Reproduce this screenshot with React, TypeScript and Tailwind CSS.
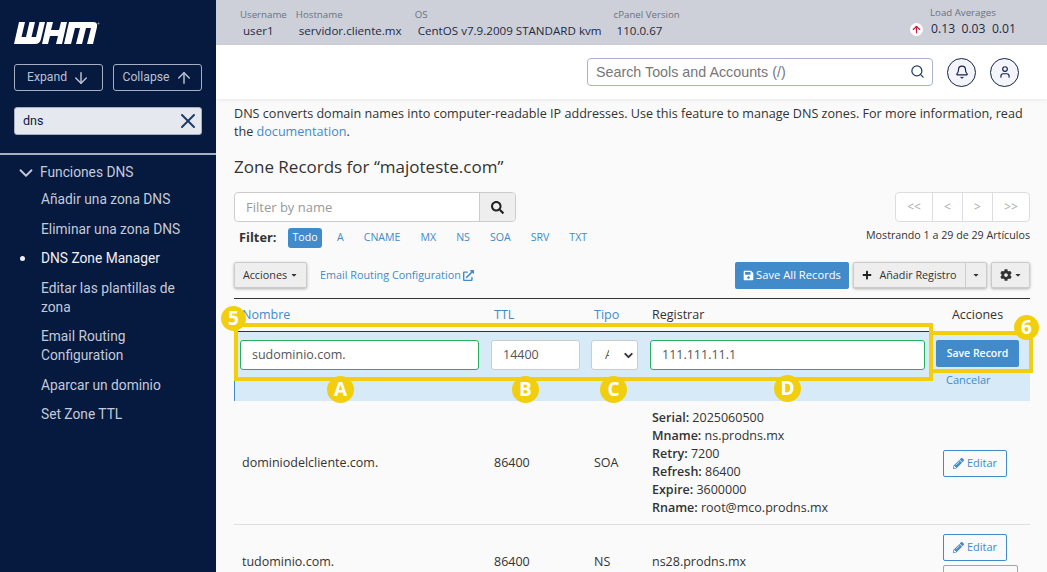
import React from "react";
import { ArrowDown, ArrowUp, X, ChevronDown, Search, Bell, User } from "lucide-react";
import { FaSearch, FaExternalLinkAlt, FaSave, FaPlus, FaCog, FaPencilAlt, FaCaretDown } from "react-icons/fa";

function Logo() {
  return (
    <svg width="86" height="23" viewBox="0 0 86 23" className="block">
      <path fill="#fff" d="M5 0h6L7.500 15H12L15.500 0H21L17.500 15H22L25.500 0H31L27 17Q26 22 21 22H0z" />
      <path fill="#fff" d="M33 0h6l-2 8h8l2-8h6l-5 22h-6l2-8h-8l-2 8h-6z" />
      <path fill="#fff" d="M55 0H79Q84 0 83 5L79 22H73L77 6H72L68 22H62L66 6H61L57 22H50z" />
      <circle cx="84.500" cy="1.500" r="1" fill="#8f97ad" />
    </svg>
  );
}

function Head({ label, value, labelCls, valueCls }: { label: string; value: string; labelCls: string; valueCls: string }) {
  return (
    <div className="flex flex-col">
      <span className={`text-[9.7px] leading-[14px] text-[#6b7280] ${labelCls}`}>{label}</span>
      <span className={`text-[11.6px] leading-[18px] text-[#1f2a44] ${valueCls}`}>{value}</span>
    </div>
  );
}

function Nav({ children, active }: { children: React.ReactNode; active?: boolean }) {
  return (
    <div className={`relative pl-[41px] pr-6 py-[5.25px] leading-[19px] text-[13.75px] ${active ? "text-[#eef0f5]" : "text-[#c4cad9]"}`}>
      {active && <span className="absolute left-[20px] top-[12px] w-[5px] h-[5px] rounded-full bg-[#eef0f5]" />}
      {children}
    </div>
  );
}

function Badge({ t, cls }: { t: string; cls: string }) {
  return (
    <span className={`absolute flex items-center justify-center rounded-full bg-[#f2cf0e] text-white font-bold text-[19px] z-20 ${cls}`}>{t}</span>
  );
}

function Edit() {
  return (
    <button className="flex items-center justify-center gap-[3px] w-[64px] h-[27px] border border-[#428bca] rounded-[2px] text-[#428bca] text-[11px]">
      <FaPencilAlt className="w-[11px] h-[11px]" />Editar
    </button>
  );
}

const grid = "grid grid-cols-[252px_100px_58px_291px_95px]";

export default function App() {
  return (
    <div className="flex w-[1047px] h-[572px] overflow-hidden font-['Open_Sans',sans-serif] text-[13px] text-[#333]">
      <aside className="w-[216px] shrink-0 bg-[#06193f] font-['Roboto',sans-serif]">
        <div className="pl-[14px] pt-[22px]"><Logo /></div>
        <div className="flex gap-[10px] px-[14px] mt-[19px]">
          <button className="flex items-center justify-center gap-[5px] w-[89px] h-[27px] border border-[#a6aec2] rounded-[3px] text-[12.2px] text-[#b9c0d2]">
            Expand <ArrowDown className="w-[18px] h-[18px]" />
          </button>
          <button className="flex items-center justify-center gap-[5px] w-[89px] h-[27px] border border-[#a6aec2] rounded-[3px] text-[12.2px] text-[#b9c0d2]">
            Collapse <ArrowUp className="w-[18px] h-[18px]" />
          </button>
        </div>
        <div className="flex items-center justify-between mx-[14px] mt-[16px] h-[28px] pl-[8px] pr-[1px] rounded-[3px] bg-[#e6e8f0] border border-[#a6aec2] text-[12.5px] text-[#06193f]">
          dns <X className="w-[24px] h-[24px] text-[#1d3a66]" strokeWidth={2} />
        </div>
        <div className="h-[2px] bg-[#a6aec2] mt-[18px]" />
        <div className="flex items-center mt-[8px] h-[19px] pl-[15px] text-[13.75px] text-[#c4cad9]">
          <ChevronDown className="w-[22px] h-[22px] mr-[3px]" strokeWidth={2} />Funciones DNS
        </div>
        <div className="mt-[3px]">
          <Nav>Añadir una zona DNS</Nav>
          <Nav>Eliminar una zona DNS</Nav>
          <Nav active>DNS Zone Manager</Nav>
          <Nav>Editar las plantillas de zona</Nav>
          <Nav>Email Routing Configuration</Nav>
          <Nav>Aparcar un dominio</Nav>
          <Nav>Set Zone TTL</Nav>
        </div>
      </aside>

      <main className="flex-1 flex flex-col min-w-0 bg-[#fafafa]">
        <div className="h-[45px] shrink-0 bg-[#cdd0d9] flex pt-[8px] pl-[24px] relative">
          <Head label="Username" value="user1" labelCls="" valueCls="pl-[3px]" />
          <Head label="Hostname" value="servidor.cliente.mx" labelCls="ml-[9px]" valueCls="ml-[12px]" />
          <Head label="OS" value="CentOS v7.9.2009 STANDARD kvm" labelCls="ml-[13px]" valueCls="ml-[16px]" />
          <Head label="cPanel Version" value="110.0.67" labelCls="ml-[12px]" valueCls="ml-[15px]" />
          <div className="absolute left-[694px] top-[6px] flex flex-col">
            <span className="ml-[20px] text-[9.7px] leading-[14px] text-[#6b7280]">Load Averages</span>
            <div className="flex items-center">
              <span className="flex items-center justify-center w-[13px] h-[13px] rounded-full bg-white text-[#d0173a] mr-[8px]">
                <ArrowUp className="w-[11px] h-[11px]" strokeWidth={2.5} />
              </span>
              <span className="text-[12.2px] leading-[18px] text-[#1f2a44] whitespace-pre">0.13{"  "}0.03{"  "}0.01</span>
            </div>
          </div>
        </div>

        <div className="h-[54px] shrink-0 bg-white flex items-center justify-end pr-[28px] shadow-[0_1px_4px_rgba(0,0,0,0.08)] z-10 font-['Liberation_Sans',sans-serif]">
          <div className="flex items-center justify-between w-[346px] h-[28px] pl-[8px] pr-[7px] pt-[1px] border border-[#aab3cc] rounded-[4px] text-[14.3px] text-[#777]">
            Search Tools and Accounts (/)
            <Search className="w-[15px] h-[15px] mb-[2px] text-[#1f3a63]" />
          </div>
          <span className="flex items-center justify-center ml-[14px] w-[29px] h-[29px] rounded-full border border-[#14234a] bg-[#f4f5fa] text-[#14234a]">
            <Bell className="w-[14px] h-[14px]" />
          </span>
          <span className="flex items-center justify-center ml-[14px] w-[29px] h-[29px] rounded-full border border-[#14234a] bg-[#f4f5fa] text-[#14234a]">
            <User className="w-[14px] h-[14px]" />
          </span>
        </div>

        <div className="pl-[18px] pr-[17px] flex-1">
          <p className="mt-[6px] leading-[18px] text-[12.6px] text-[#333]">
            DNS converts domain names into computer-readable IP addresses. Use this feature to manage DNS zones. For more information, read the <span className="text-[#428bca]">documentation</span>.
          </p>
          <h2 className="mt-[14px] text-[17px] leading-[24px] text-[#333]">Zone Records for “majoteste.com”</h2>

          <div className="flex justify-between mt-[13px]">
            <div>
              <div className="flex w-[282px] h-[30px] border border-[#ccc] rounded-[4px] bg-white">
                <span className="flex-1 pl-[11px] leading-[28px] text-[13px] text-[#999]">Filter by name</span>
                <span className="flex items-center justify-center w-[36px] border-l border-[#ccc] bg-[#eee] rounded-r-[4px] text-[#222]">
                  <FaSearch className="w-[13px] h-[13px]" />
                </span>
              </div>
              <div className="flex items-center mt-[6px] h-[20px] text-[10.6px] text-[#428bca]">
                <b className="ml-[5px] w-[49px] text-[12.8px] text-[#333]">Filter:</b>
                <span className="w-[34px] h-[20px] leading-[19px] text-center rounded-[3px] bg-[#428bca] text-white">Todo</span>
                <span className="ml-[15px]">A</span>
                <span className="ml-[20px]">CNAME</span>
                <span className="ml-[20px]">MX</span>
                <span className="ml-[20px]">NS</span>
                <span className="ml-[20px]">SOA</span>
                <span className="ml-[20px]">SRV</span>
                <span className="ml-[20px]">TXT</span>
              </div>
            </div>
            <div className="flex flex-col items-end">
              <div className="flex h-[30px] w-[135px] border border-[#ddd] rounded-[4px] bg-white text-[#aaa] text-[12px] divide-x divide-[#ddd]">
                <span className="w-[37px] flex items-center justify-center">&lt;&lt;</span>
                <span className="w-[30px] flex items-center justify-center">&lt;</span>
                <span className="w-[30px] flex items-center justify-center">&gt;</span>
                <span className="flex-1 flex items-center justify-center">&gt;&gt;</span>
              </div>
              <span className="mt-[3px] text-[10.7px] leading-[20px] text-[#333]">Mostrando 1 a 29 de 29 Artículos</span>
            </div>
          </div>

          <div className="flex items-center justify-between mt-[13px] h-[28px]">
            <div className="flex items-center">
              <button className="flex items-center justify-center gap-[3px] w-[73px] h-[26px] border border-[#ccc] rounded-[2px] bg-[#eee] text-[10.8px] text-[#333] shadow-[0_1px_3px_rgba(0,0,0,0.3)]">
                Acciones<FaCaretDown className="w-[8px] h-[8px]" />
              </button>
              <span className="flex items-center gap-[2px] ml-[13px] text-[10.8px] text-[#428bca]">
                Email Routing Configuration <FaExternalLinkAlt className="w-[11px] h-[11px]" />
              </span>
            </div>
            <div className="flex items-center">
              <button className="flex items-center justify-center gap-[2px] w-[114px] h-[27px] rounded-[2px] bg-[#428bca] text-white text-[11.2px]">
                <FaSave className="w-[11px] h-[11px]" />Save All Records
              </button>
              <div className="flex ml-[4px] h-[26px] border border-[#ccc] rounded-[2px] bg-[#eee] text-[10.8px] shadow-[0_1px_3px_rgba(0,0,0,0.3)]">
                <span className="flex items-center justify-center gap-[7px] w-[112px] border-r border-[#ccc]">
                  <FaPlus className="w-[10px] h-[10px] text-[#222]" />Añadir Registro
                </span>
                <span className="flex items-center justify-center w-[20px]"><FaCaretDown className="w-[8px] h-[8px]" /></span>
              </div>
              <button className="flex items-center justify-center gap-[2px] ml-[4px] w-[39px] h-[26px] border border-[#ccc] rounded-[2px] bg-[#eee] text-[#333] shadow-[0_1px_3px_rgba(0,0,0,0.3)]">
                <FaCog className="w-[12px] h-[12px]" /><FaCaretDown className="w-[8px] h-[8px]" />
              </button>
            </div>
          </div>

          <div className="relative mt-[9px] border-t border-[#333]">
            <div className={`${grid} h-[32px] items-center text-[12.5px] pt-[1px]`}>
              <span className="pl-[8px] text-[#428bca]">Nombre</span>
              <span className="pl-[8px] text-[#428bca]">TTL</span>
              <span className="pl-[8px] text-[#428bca]">Tipo</span>
              <span className="pl-[8px] text-[#333]">Registrar</span>
              <span className="pr-[10px] text-center text-[#333]">Acciones</span>
            </div>

            <div className={`${grid} h-[70px] bg-[#d6eaf8] border-t border-[#333] shadow-[inset_1px_0_0_#428bca] pt-[8px] text-[12.5px]`}>
              <div className="pl-[6px] pr-[7px]"><div className="h-[30px] pl-[11px] leading-[28px] rounded-[3px] border border-[#27ae60] bg-white text-[#555]">sudominio.com.</div></div>
              <div className="pl-[5px] pr-[6px]"><div className="h-[30px] pl-[11px] leading-[28px] rounded-[3px] border border-[#ccc] bg-white text-[#555]">14400</div></div>
              <div className="pl-[5px] pr-[6px]">
                <div className="flex items-center h-[30px] pl-[13px] rounded-[3px] border border-[#ccc] bg-white text-[#555] overflow-hidden">
                  <span className="w-[4px] overflow-hidden">A</span>
                  <ChevronDown className="w-[13px] h-[13px] ml-[13px] shrink-0 text-[#333]" strokeWidth={3.5} />
                </div>
              </div>
              <div className="pl-[6px] pr-[10px]"><div className="h-[30px] pl-[11px] leading-[28px] rounded-[3px] border border-[#27ae60] bg-white text-[#555]">111.111.11.1</div></div>
              <div className="pl-[1px]">
                <button className="w-[83px] h-[27px] rounded-[2px] bg-[#428bca] text-white text-[10.5px] font-semibold">Save Record</button>
                <div className="pl-[10px] mt-[5px] text-[11px] text-[#428bca]">Cancelar</div>
              </div>
            </div>

            <div className={`${grid} h-[124px] items-center border-b border-[#ddd] text-[12.5px]`}>
              <span className="pl-[8px] pt-[2px]">dominiodelcliente.com.</span>
              <span className="pl-[8px] pt-[2px]">86400</span>
              <span className="pl-[8px] pt-[2px]">SOA</span>
              <div className="pl-[8px] leading-[18px]">
                <div><b className="font-semibold">Serial:</b> 2025060500</div>
                <div><b className="font-semibold">Mname:</b> ns.prodns.mx</div>
                <div><b className="font-semibold">Retry:</b> 7200</div>
                <div><b className="font-semibold">Refresh:</b> 86400</div>
                <div><b className="font-semibold">Expire:</b> 3600000</div>
                <div><b className="font-semibold">Rname:</b> root@mco.prodns.mx</div>
              </div>
              <div className="pl-[8px] pt-[2px]"><Edit /></div>
            </div>

            <div className={`${grid} text-[12.5px] pt-[9px]`}>
              <span className="pl-[8px] pt-[19px]">tudominio.com.</span>
              <span className="pl-[8px] pt-[19px]">86400</span>
              <span className="pl-[8px] pt-[19px]">NS</span>
              <span className="pl-[8px] pt-[19px]">ns28.prodns.mx</span>
              <div className="pl-[8px]">
                <Edit />
                <div className="mt-[4px] w-[75px] h-[28px] border border-[#dc8a96] rounded-[2px]" />
              </div>
            </div>

            <div className="absolute left-0 top-[24px] w-[699px] h-[58px] border-[4px] border-[#f2cf0e] z-10" />
            <div className="absolute left-[695px] top-[32px] w-[104px] h-[42px] border-[4px] border-[#f2cf0e] z-10" />
            <Badge t="5" cls="left-[-13px] top-[7px] w-[25px] h-[25px]" />
            <Badge t="6" cls="left-[780px] top-[16px] w-[25px] h-[25px]" />
            <Badge t="A" cls="left-[93px] top-[77px] w-[27px] h-[27px]" />
            <Badge t="B" cls="left-[278px] top-[77px] w-[27px] h-[27px]" />
            <Badge t="C" cls="left-[366px] top-[77px] w-[27px] h-[27px]" />
            <Badge t="D" cls="left-[540px] top-[76px] w-[27px] h-[27px]" />
          </div>
        </div>
      </main>
    </div>
  );
}
